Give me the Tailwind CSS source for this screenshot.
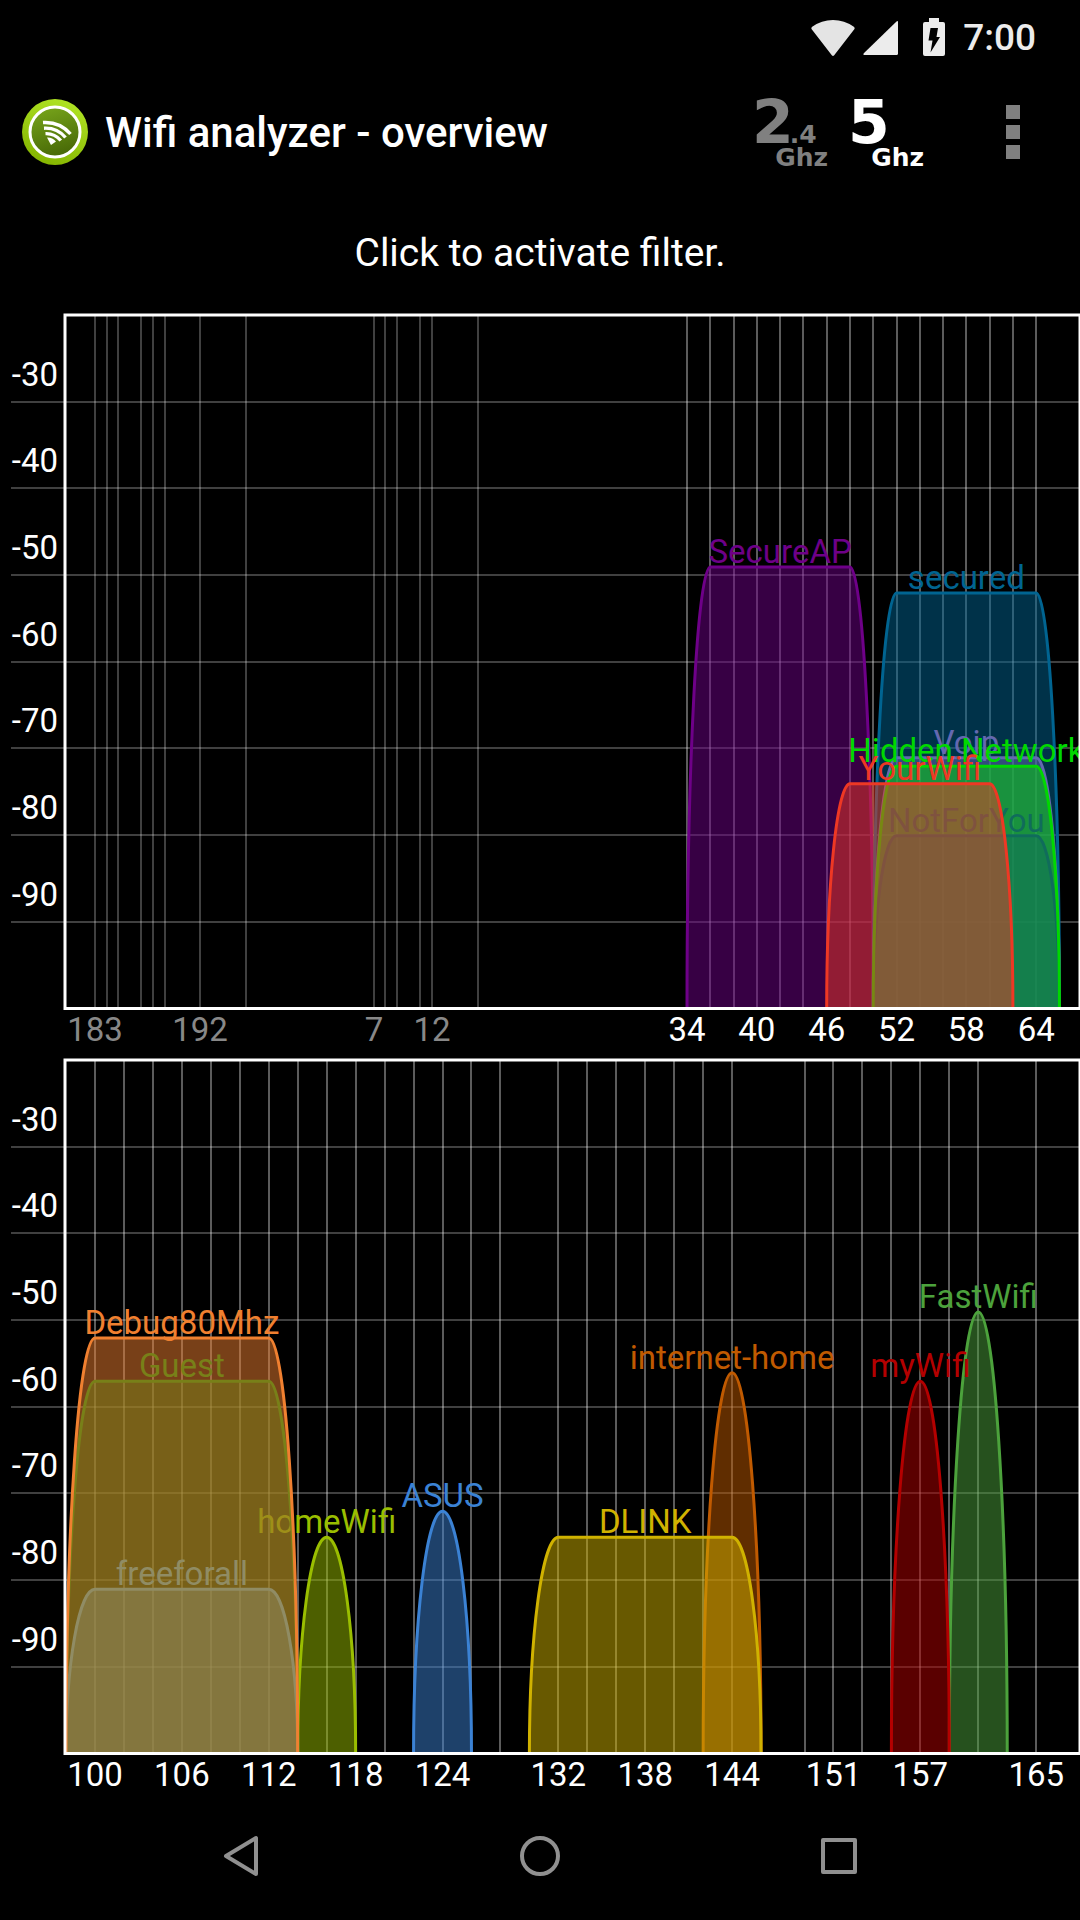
<!DOCTYPE html>
<html lang="en">
<head>
<meta charset="utf-8">
<meta name="viewport" content="width=device-width, initial-scale=1">
<title>Wifi analyzer</title>
<script src="https://cdn.jsdelivr.net/npm/@tailwindcss/browser@4"></script>
</head>
<body class="min-h-screen flex flex-col bg-black text-white font-[Roboto,sans-serif]">

<div class="flex h-18 items-center justify-end pt-1 pr-11 text-[#ececec]">
  <svg class="mr-2 h-9 w-11" viewBox="0 0 44 36" fill="#e4e4e4" aria-hidden="true"><path d="M.7 9.2Q-.2 7.8 1.2 6.8 10.5 0 22 0t20.800 6.800q1.400 1 .500 2.400L23.200 35.200q-1.200 1.400-2.400 0z"/></svg>
  <svg class="mr-6 h-9 w-9" viewBox="0 0 36 36" fill="#ececec" aria-hidden="true"><path d="M33.500 1.500Q35 .2 35 2v31.500q0 1.500-1.500 1.500H1.500Q-.5 35 .8 33.200z"/></svg>
  <svg class="mr-[18px] h-10 w-[22px]" viewBox="0 0 22 40" aria-hidden="true"><path fill="#ececec" d="M6 0h10v4h4q2 0 2 2v30q0 2-2 2H2q-2 0-2-2V6q0-2 2-2h4z"/><path fill="#000" d="M7.500 10h7.500l-1.500 9H17L7.500 34.500 9.500 22.500H5.500z"/></svg>
  <span class="text-[37px] leading-10 font-medium">7:00</span>
</div>

<header class="flex h-30 items-center pl-[21px] pr-12">
  <svg class="mr-4 size-17 shrink-0" viewBox="0 0 68 68" role="img" aria-label="Wifi analyzer logo">
    <defs>
      <linearGradient id="rim" x1="0.700" y1="0" x2="0.300" y2="1"><stop offset="0" stop-color="#b0e424"/><stop offset="1" stop-color="#84b400"/></linearGradient>
      <linearGradient id="disc" x1="0" y1="0" x2="0.300" y2="1"><stop offset="0" stop-color="#7aa81c"/><stop offset="1" stop-color="#4a6c08"/></linearGradient>
    </defs>
    <circle cx="34" cy="34" r="33" fill="url(#rim)"/>
    <circle cx="34" cy="34" r="25" fill="url(#disc)" stroke="#fff" stroke-width="3"/>
    <g fill="none" stroke="#fff" stroke-width="3.400">
      <path d="M22 24.500Q39 23.500 49.500 36"/>
      <path d="M23 30.200Q36 29.500 44.500 39.500"/>
      <path d="M24.500 35.600Q33.500 35.200 39.800 42.500"/>
    </g>
    <path fill="#fff" d="M26 39.500Q31 39 35 43.500L30 47z"/>
  </svg>
  <h1 class="pt-0.5 text-[42px] leading-12 font-medium whitespace-nowrap">Wifi analyzer - overview</h1>
  <div class="ml-auto flex items-center pt-1 font-['DejaVu_Sans',sans-serif] font-bold">
    <button type="button" class="mr-5 flex w-[76px] flex-col text-left text-[#808080]">
      <span class="flex h-12 items-baseline text-[60px] leading-12">2<span class="-ml-1 text-[25px] leading-6">.4</span></span>
      <span class="self-end text-[25px] leading-6">Ghz</span>
    </button>
    <button type="button" class="mr-[70px] flex w-[76px] flex-col text-left text-white" aria-pressed="true">
      <span class="flex h-12 items-baseline text-[60px] leading-12">5</span>
      <span class="self-end text-[25px] leading-6">Ghz</span>
    </button>
  </div>
  <button type="button" class="flex flex-col gap-[6px] px-3" aria-label="More options">
    <span class="size-[14px] bg-[#808080]"></span>
    <span class="size-[14px] bg-[#808080]"></span>
    <span class="size-[14px] bg-[#808080]"></span>
  </button>
</header>

<main class="flex flex-col">
  <button type="button" class="h-[118px] pt-1 text-[39px] leading-12">Click to activate filter.</button>
  <svg id="low-band" class="block w-full" viewBox="0 0 1080 745" font-size="33" role="img" aria-label="Channels 183 to 64"></svg>
  <svg id="high-band" class="block w-full" viewBox="0 0 1080 745" font-size="33" role="img" aria-label="Channels 100 to 165"></svg>
</main>

<nav class="grid h-28 grid-cols-3 items-center justify-items-center px-23" aria-label="System">
  <button type="button" aria-label="Back"><svg class="size-12" viewBox="0 0 48 48" fill="none" stroke="#909090" stroke-width="4" stroke-linejoin="round"><path d="M9 24 39 6V42z"/></svg></button>
  <button type="button" aria-label="Home"><svg class="size-12" viewBox="0 0 48 48" fill="none" stroke="#909090" stroke-width="4"><circle cx="24" cy="24" r="18"/></svg></button>
  <button type="button" aria-label="Recent apps"><svg class="size-12" viewBox="0 0 48 48" fill="none" stroke="#909090" stroke-width="4" stroke-linejoin="round"><rect x="8" y="8" width="32" height="32"/></svg></button>
</nav>

<script>
const LEFT = 65, TOP = 5, BOTTOM = 698.5, DB = 26 / 3;

function line(x1, y1, x2, y2, color, width) {
  return `<line x1="${x1}" y1="${y1}" x2="${x2}" y2="${y2}" stroke="${color}" stroke-width="${width}"/>`;
}

// A network is a flat top between two shoulders, with a quarter ellipse down each side.
function network([name, from, to, level, color], xOf, side) {
  const a = xOf(from), b = xOf(to), y = TOP + (-20 - level) * DB + 0.7, h = BOTTOM - y;
  return `<path d="M${a} ${BOTTOM}A${side} ${h} 0 0 1 ${a + side} ${y}H${b - side}A${side} ${h} 0 0 1 ${b} ${BOTTOM}" fill="${color}" fill-opacity="0.5" stroke="${color}" stroke-width="3"/>` +
    `<text x="${(a + b) / 2}" y="${y - 4}" text-anchor="middle" fill="${color}">${name}</text>`;
}

function draw(id, { grid, labels, networks, xOf, side }) {
  let out = '';
  for (const [x, color] of grid) out += line(Math.round(x), TOP, Math.round(x), BOTTOM, color, 2);
  for (let i = 1; i < 8; i++) {
    const y = Math.round(TOP + i * 10 * DB);
    out += line(11, y, 1080, y, '#ffffff40', 2);
    out += `<text x="58" y="${y - 16}" text-anchor="end" fill="#fff">-${20 + i * 10}</text>`;
  }
  for (const n of networks) out += network(n, xOf, side);
  out += `<rect x="${LEFT}" y="${TOP}" width="${1080 - LEFT}" height="${BOTTOM - TOP}" fill="none" stroke="#fff" stroke-width="3"/>`;
  for (const [x, text, color] of labels) out += `<text x="${x}" y="731" text-anchor="middle" fill="${color}">${text}</text>`;
  document.getElementById(id).innerHTML = out;
}

const lowX = ch => 687 + (ch - 34) * 11.64;
const highX = ch => 95 + (ch - 100) * 14.48;
const range = (from, to) => Array.from({ length: (to - from) / 2 + 1 }, (_, i) => from + i * 2);

draw('low-band', {
  xOf: lowX, side: 23.3,
  grid: [...[95, 107, 118, 141, 153, 165, 200, 246, 374, 385, 397, 420, 432, 478].map(x => [x, '#404040']),
         ...range(34, 64).map(ch => [lowX(ch), '#5c5c5c'])],
  labels: [[95, 183, '#888'], [200, 192, '#888'], [374, 7, '#888'], [432, 12, '#888'],
           ...[34, 40, 46, 52, 58, 64].map(ch => [lowX(ch), ch, '#fff'])],
  networks: [
    ['SecureAP', 34, 50, -49, '#6e0088'],
    ['secured', 50, 66, -52, '#006491'],
    ['Voip', 50, 66, -71, '#6468b0'],
    ['NotForYou', 50, 66, -80, '#2000b6'],
    ['Hidden Network', 50, 66, -72, '#00d800'],
    ['YourWifi', 46, 62, -74, '#ee3824'],
  ],
});

draw('high-band', {
  xOf: highX, side: 28.96,
  grid: [...range(100, 128), ...range(132, 144), ...range(149, 161), 165].map(ch => [highX(ch), '#5c5c5c']),
  labels: [100, 106, 112, 118, 124, 132, 138, 144, 151, 157, 165].map(ch => [highX(ch), ch, '#fff']),
  networks: [
    ['homeWifi', 114, 118, -75, '#9abe00'],
    ['Guest', 98, 114, -57, '#008000'],
    ['freeforall', 98, 114, -81, '#309898'],
    ['Debug80Mhz', 98, 114, -52, '#f08030'],
    ['ASUS', 122, 126, -72, '#3b82d4'],
    ['internet-home', 142, 146, -56, '#c05a00'],
    ['DLINK', 130, 146, -75, '#d0b200'],
    ['FastWifi', 159, 163, -49, '#4ca23c'],
    ['myWifi', 155, 159, -57, '#b40000'],
  ],
});
</script>
</body>
</html>
